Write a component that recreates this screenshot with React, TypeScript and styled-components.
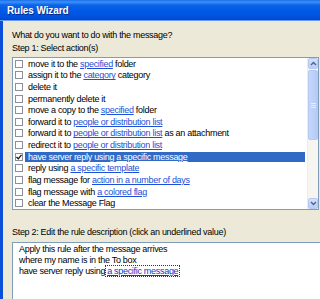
import React from 'react';
import styled, { createGlobalStyle } from 'styled-components';

const GlobalStyle = createGlobalStyle`
  html, body {
    margin: 0;
    padding: 0;
    background: #ece9d8;
  }
  body {
    font-family: "Liberation Sans", Arial, sans-serif;
    font-size: 9px;
    letter-spacing: -0.3px;
    color: #000;
  }
`;

const ROW_H = 35 / 3;

const Window = styled.div`
  width: 320px;
  height: 299px;
  overflow: hidden;
  display: flex;
  flex-direction: column;
  background: #ece9d8;
`;

const TitleBar = styled.div`
  height: 21px;
  flex: none;
  display: flex;
  align-items: center;
  padding-left: 7px;
  background: linear-gradient(
    to bottom,
    #1a6fe8 0%,
    #3d91fa 10%,
    #0b64e6 25%,
    #0058e8 55%,
    #0052df 85%,
    #0045c9 100%
  );
  border-bottom: 1px solid #6a9bf0;
  box-sizing: border-box;
`;

const Title = styled.span`
  color: #fff;
  font-weight: bold;
  font-size: 10px;
  letter-spacing: -0.1px;
  text-shadow: 1px 1px 0 #0a2a8a;
  margin-top: 1px;
`;

const Frame = styled.div`
  flex: 1;
  display: flex;
  min-height: 0;
`;

const FrameEdge = styled.div`
  width: 3px;
  flex: none;
  background: #0b4fd8;
`;

const Content = styled.div`
  flex: 1;
  padding-left: 9px;
  display: flex;
  flex-direction: column;
`;

const Prompt = styled.div<{ $top: number }>`
  line-height: 11px;
  height: 11px;
  margin-top: ${p => p.$top}px;
  white-space: nowrap;
`;

const ActionList = styled.div`
  margin-top: 3px;
  width: 307px;
  height: 153px;
  box-sizing: border-box;
  border: 1px solid #7f9db9;
  background: #fff;
  display: flex;
  flex: none;
`;

const Rows = styled.div`
  flex: 1;
  display: flex;
  flex-direction: column;
`;

const Row = styled.div`
  height: ${ROW_H}px;
  display: flex;
  align-items: center;
  padding-left: 2px;
`;

const CheckBox = styled.span`
  width: 8px;
  height: 8px;
  flex: none;
  box-sizing: border-box;
  border: 1px solid #8a8f98;
  background: #fff;
  display: flex;
  align-items: center;
  justify-content: center;
`;

const Label = styled.span<{ $selected?: boolean }>`
  flex: 1;
  margin: 0 2px 0 2px;
  padding-left: 3px;
  height: 10px;
  line-height: 10px;
  white-space: nowrap;
  background: ${p => (p.$selected ? '#316ac5' : 'transparent')};
  color: ${p => (p.$selected ? '#fff' : '#000')};
`;

const Link = styled.span<{ $selected?: boolean }>`
  color: ${p => (p.$selected ? '#fff' : '#1e4fd8')};
  text-decoration: underline;
`;

const ScrollBar = styled.div`
  width: 11px;
  flex: none;
  display: flex;
  flex-direction: column;
  background: #f6f5ef;
  border-left: 1px solid #eeede5;
  box-sizing: border-box;
`;

const ScrollButton = styled.div`
  height: 11px;
  flex: none;
  box-sizing: border-box;
  border: 1px solid #b6c9f2;
  border-radius: 2px;
  background: linear-gradient(to bottom, #d4e1fc, #b9cdf8);
  display: flex;
  align-items: center;
  justify-content: center;
`;

const Track = styled.div`
  flex: 1;
  padding: 1px 0;
  display: flex;
  flex-direction: column;
`;

const Thumb = styled.div`
  height: 70px;
  box-sizing: border-box;
  border: 1px solid #b6c9f2;
  border-radius: 2px;
  background: linear-gradient(to right, #c4d6fb, #b6cbf7);
  display: flex;
  flex-direction: column;
  align-items: center;
  justify-content: center;
  gap: 1px;
`;

const Grip = styled.span`
  width: 5px;
  height: 1px;
  background: #e6eefc;
`;

const DescBox = styled.div`
  margin-top: 4px;
  width: 320px;
  flex: 1;
  box-sizing: border-box;
  border: 1px solid #7f9db9;
  border-right: none;
  border-bottom: none;
  background: #fff;
  padding: 1px 0 0 6px;
`;

const DescLine = styled.div`
  height: 11px;
  line-height: 11px;
  white-space: nowrap;
`;

const ValueLink = styled.span`
  color: #1a33c8;
  text-decoration: underline;
  outline: 1px dotted #333;
  outline-offset: 0px;
  padding: 0 1px;
  margin-left: 1px;
`;

type Part = { t: string; link?: boolean };

const actions: { parts: Part[]; checked?: boolean }[] = [
  { parts: [{ t: 'move it to the ' }, { t: 'specified', link: true }, { t: ' folder' }] },
  { parts: [{ t: 'assign it to the ' }, { t: 'category', link: true }, { t: ' category' }] },
  { parts: [{ t: 'delete it' }] },
  { parts: [{ t: 'permanently delete it' }] },
  { parts: [{ t: 'move a copy to the ' }, { t: 'specified', link: true }, { t: ' folder' }] },
  { parts: [{ t: 'forward it to ' }, { t: 'people or distribution list', link: true }] },
  {
    parts: [
      { t: 'forward it to ' },
      { t: 'people or distribution list', link: true },
      { t: ' as an attachment' },
    ],
  },
  { parts: [{ t: 'redirect it to ' }, { t: 'people or distribution list', link: true }] },
  {
    parts: [{ t: 'have server reply using ' }, { t: 'a specific message', link: true }],
    checked: true,
  },
  { parts: [{ t: 'reply using ' }, { t: 'a specific template', link: true }] },
  { parts: [{ t: 'flag message for ' }, { t: 'action in a number of days', link: true }] },
  { parts: [{ t: 'flag message with ' }, { t: 'a colored flag', link: true }] },
  { parts: [{ t: 'clear the Message Flag' }] },
];

const Check = () => (
  <svg width="6" height="6" viewBox="0 0 6 6">
    <path d="M0.5 3 L2.3 4.8 L5.5 0.8" fill="none" stroke="#111" strokeWidth="1.3" />
  </svg>
);

const Arrow: React.FC<{ up?: boolean }> = ({ up }) => (
  <svg width="7" height="5" viewBox="0 0 7 5">
    <path
      d={up ? 'M1 4 L3.5 1.5 L6 4' : 'M1 1 L3.5 3.5 L6 1'}
      fill="none"
      stroke="#4d6185"
      strokeWidth="1.3"
    />
  </svg>
);

const App: React.FC = () => {
  return (
    <>
      <GlobalStyle />
      <Window>
        <TitleBar>
          <Title>Rules Wizard</Title>
        </TitleBar>
        <Frame>
          <FrameEdge />
          <Content>
            <Prompt $top={9}>What do you want to do with the message?</Prompt>
            <Prompt $top={2}>Step 1: Select action(s)</Prompt>
            <ActionList>
              <Rows>
                {actions.map((a, i) => (
                  <Row key={i}>
                    <CheckBox>{a.checked && <Check />}</CheckBox>
                    <Label $selected={a.checked}>
                      {a.parts.map((p, j) =>
                        p.link ? (
                          <Link key={j} $selected={a.checked}>
                            {p.t}
                          </Link>
                        ) : (
                          <span key={j}>{p.t}</span>
                        )
                      )}
                    </Label>
                  </Row>
                ))}
              </Rows>
              <ScrollBar>
                <ScrollButton>
                  <Arrow up />
                </ScrollButton>
                <Track>
                  <Thumb>
                    <Grip />
                    <Grip />
                    <Grip />
                  </Thumb>
                </Track>
                <ScrollButton>
                  <Arrow />
                </ScrollButton>
              </ScrollBar>
            </ActionList>
            <Prompt $top={17}>Step 2: Edit the rule description (click an underlined value)</Prompt>
            <DescBox>
              <DescLine>Apply this rule after the message arrives</DescLine>
              <DescLine>where my name is in the To box</DescLine>
              <DescLine>
                have server reply using<ValueLink>a specific message</ValueLink>
              </DescLine>
            </DescBox>
          </Content>
        </Frame>
      </Window>
    </>
  );
};

export default App;
